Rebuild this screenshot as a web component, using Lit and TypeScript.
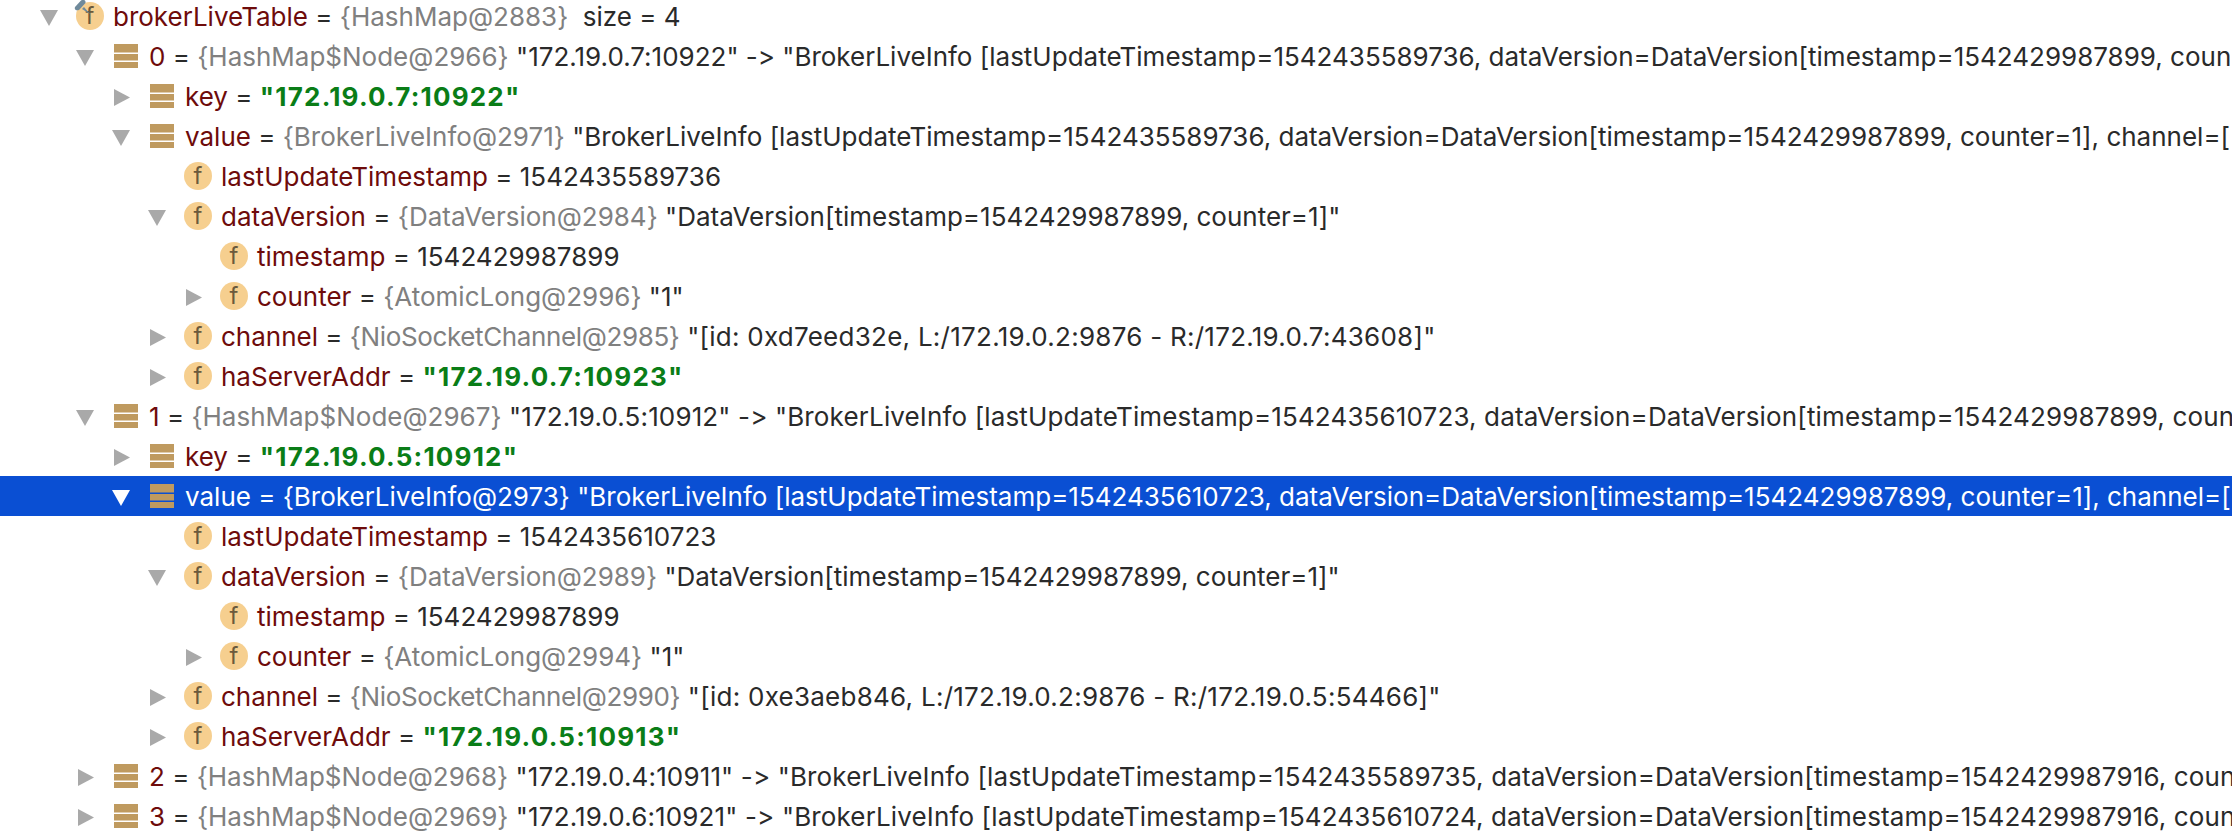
import { LitElement, html, css, svg } from "lit";
import { customElement } from "lit/decorators.js";

type Row = { l: number; a: "d" | "r" | ""; i: "f" | "b"; n: string; t?: string; v?: string; s?: string; pin?: boolean; sel?: boolean; ch?: boolean; wide?: boolean };

const rows: Row[] = [
  { l: 0, a: "d", i: "f", pin: true, n: "brokerLiveTable", t: "{HashMap@2883}", v: "  size = 4" },
  { l: 1, a: "d", i: "b", n: "0", t: "{HashMap$Node@2966}", v: ' "172.19.0.7:10922" -> "BrokerLiveInfo [lastUpdateTimestamp=1542435589736, dataVersion=DataVersion[timestamp=1542429987899, coun' },
  { l: 2, a: "r", i: "b", n: "key", s: '"172.19.0.7:10922"' },
  { l: 2, a: "d", i: "b", n: "value", t: "{BrokerLiveInfo@2971}", v: ' "BrokerLiveInfo [lastUpdateTimestamp=1542435589736, dataVersion=DataVersion[timestamp=1542429987899, counter=1], channel=[' },
  { l: 3, a: "", i: "f", n: "lastUpdateTimestamp", v: "1542435589736" },
  { l: 3, a: "d", i: "f", n: "dataVersion", t: "{DataVersion@2984}", v: ' "DataVersion[timestamp=1542429987899, counter=1]"' },
  { l: 4, a: "", i: "f", n: "timestamp", v: "1542429987899" },
  { l: 4, a: "r", i: "f", n: "counter", t: "{AtomicLong@2996}", v: ' "1"' },
  { l: 3, a: "r", i: "f", ch: true, n: "channel", t: "{NioSocketChannel@2985}", v: ' "[id: 0xd7eed32e, L:/172.19.0.2:9876 - R:/172.19.0.7:43608]"' },
  { l: 3, a: "r", i: "f", n: "haServerAddr", s: '"172.19.0.7:10923"' },
  { l: 1, a: "d", i: "b", wide: true, n: "1", t: "{HashMap$Node@2967}", v: ' "172.19.0.5:10912" -> "BrokerLiveInfo [lastUpdateTimestamp=1542435610723, dataVersion=DataVersion[timestamp=1542429987899, coun' },
  { l: 2, a: "r", i: "b", n: "key", s: '"172.19.0.5:10912"' },
  { l: 2, a: "d", i: "b", sel: true, n: "value", t: "{BrokerLiveInfo@2973}", v: ' "BrokerLiveInfo [lastUpdateTimestamp=1542435610723, dataVersion=DataVersion[timestamp=1542429987899, counter=1], channel=[' },
  { l: 3, a: "", i: "f", n: "lastUpdateTimestamp", v: "1542435610723" },
  { l: 3, a: "d", i: "f", n: "dataVersion", t: "{DataVersion@2989}", v: ' "DataVersion[timestamp=1542429987899, counter=1]"' },
  { l: 4, a: "", i: "f", n: "timestamp", v: "1542429987899" },
  { l: 4, a: "r", i: "f", n: "counter", t: "{AtomicLong@2994}", v: ' "1"' },
  { l: 3, a: "r", i: "f", ch: true, n: "channel", t: "{NioSocketChannel@2990}", v: ' "[id: 0xe3aeb846, L:/172.19.0.2:9876 - R:/172.19.0.5:54466]"' },
  { l: 3, a: "r", i: "f", n: "haServerAddr", s: '"172.19.0.5:10913"' },
  { l: 1, a: "r", i: "b", wide: true, n: "2", t: "{HashMap$Node@2968}", v: ' "172.19.0.4:10911" -> "BrokerLiveInfo [lastUpdateTimestamp=1542435589735, dataVersion=DataVersion[timestamp=1542429987916, coun' },
  { l: 1, a: "r", i: "b", wide: true, n: "3", t: "{HashMap$Node@2969}", v: ' "172.19.0.6:10921" -> "BrokerLiveInfo [lastUpdateTimestamp=1542435610724, dataVersion=DataVersion[timestamp=1542429987916, coun' },
];

const arrowDown = svg`<svg class="arrow" width="18" height="16" viewBox="0 0 18 16"><path d="M0 0H18L9 16Z"/></svg>`;
const arrowRight = svg`<svg class="arrow right" width="16" height="17" viewBox="0 0 16 17"><path d="M0 0L16 8.5L0 17Z"/></svg>`;
const bars = svg`<svg class="bars" width="24" height="24" viewBox="0 0 24 24"><path d="M0 0H24V8.5H0ZM0 10H24V16.5H0ZM0 18H24V24H0Z"/></svg>`;
const pin = svg`<svg class="pin" width="20" height="16" viewBox="0 0 20 16"><path d="M2 7L8 0.5C10 -1 13 0 12.5 3L6 10C3 11 1 9.500 2 7Z" fill="#6f8a9b"/><path d="M9 9L17 14L11 7Z" fill="#6f8a9b"/></svg>`;

@customElement("app-root")
export class AppRoot extends LitElement {
  static styles = css`
    :host {
      display: block;
      height: 840px;
      width: 2232px;
      overflow: hidden;
      background: #fff;
      font-family: Inter, "Liberation Sans", sans-serif;
      font-size: 26px;
      font-feature-settings: "calt" 0, "liga" 0;
      color: #2a2a2a;
    }
    .tree { margin-top: -4px; }
    .row {
      display: flex;
      align-items: center;
      height: 40px;
      white-space: pre;
      overflow: hidden;
    }
    .row.sel { background: #0a4fd3; color: #fff; }
    .aslot { flex: 0 0 36px; display: flex; align-items: center; padding-top: 3px; height: 37px; box-sizing: border-box; }
    .arrow { fill: #a9a9a9; display: block; }
    .arrow.right { margin-left: 2px; }
    .sel .arrow { fill: #fff; }
    .islot { flex: 0 0 37px; position: relative; display: flex; align-items: center; height: 40px; }
    .bars { fill: #bf9a5f; margin-left: 2px; display: block; }
    .fi {
      width: 28px;
      height: 28px;
      border-radius: 50%;
      background: #f6cf8f;
      color: #6b5a3c;
      font-size: 24px;
      line-height: 28px;
      text-align: center;
    }
    .pin { position: absolute; left: -3px; top: 4px; }
    .n { color: #6e0b0b; }
    .sel .n { color: #fff; }
    .t { color: #808080; }
    .sel .t { color: #fff; }
    .s { color: #0a7d17; font-weight: 700; letter-spacing: 1.2px; }
    .ch .t { letter-spacing: -0.37px; }
    .ch .v { letter-spacing: 0.26px; }
    .wide .v { letter-spacing: 0.14px; }
  `;

  private renderRow(r: Row) {
    return html`<div class="row ${r.sel ? "sel" : ""} ${r.ch ? "ch" : ""} ${r.wide ? "wide" : ""}" style="padding-left:${40 + 36 * r.l}px">
      <span class="aslot">${r.a === "d" ? arrowDown : r.a === "r" ? arrowRight : ""}</span>
      <span class="islot">${r.i === "f" ? html`<span class="fi">f</span>` : bars}${r.pin ? pin : ""}</span>
      <span class="n">${r.n}</span><span> = </span>${r.t ? html`<span class="t">${r.t}</span>` : ""}${r.s ? html`<span class="s">${r.s}</span>` : ""}${r.v ? html`<span class="v">${r.v}</span>` : ""}
    </div>`;
  }

  render() {
    return html`<div class="tree">${rows.map((r) => this.renderRow(r))}</div>`;
  }
}
